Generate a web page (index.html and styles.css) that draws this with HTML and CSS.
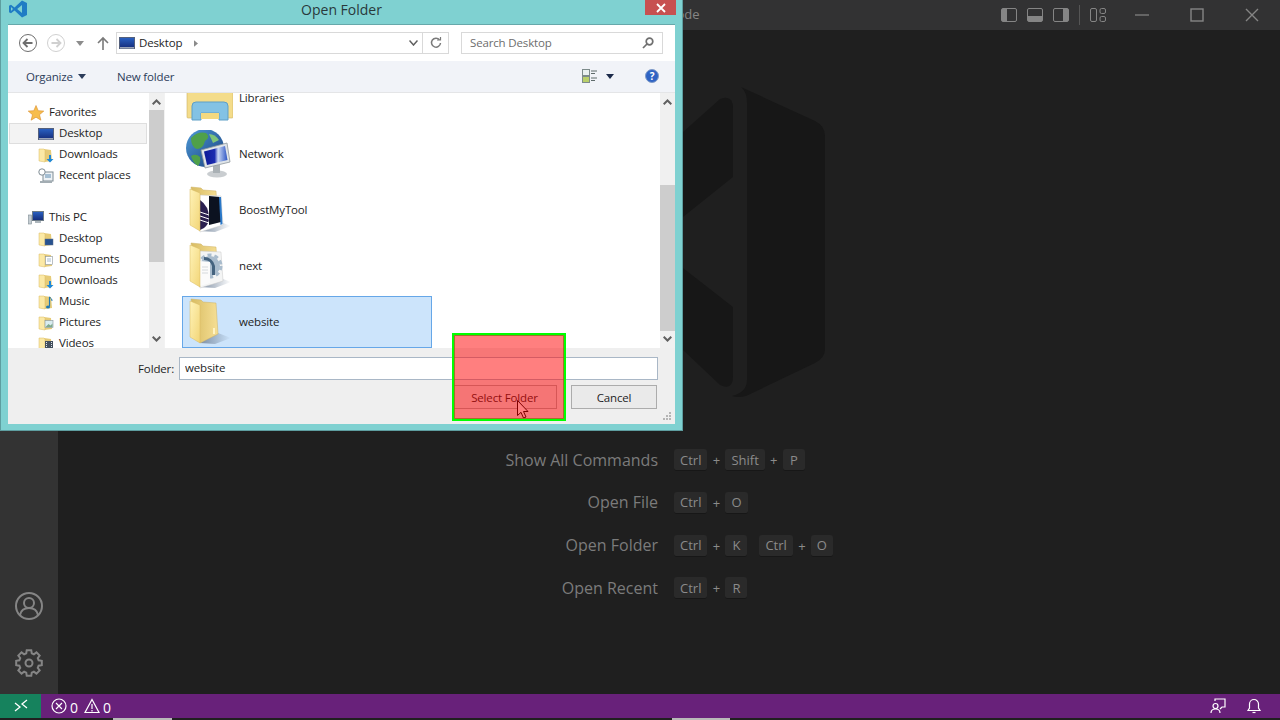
FILE: index.html
```html
<!DOCTYPE html>
<html lang="en">
<head>
    <meta charset="UTF-8">
    <title>Visual Studio Code - Open Folder</title>
    <link rel="stylesheet" href="styles.css">
</head>
<body>
    <svg class="sprite" width="0" height="0">
        <defs>
            <linearGradient id="leaf" x1="0" y1="0" x2="1" y2="1">
                <stop offset="0" stop-color="#fff3b8"/>
                <stop offset="1" stop-color="#f2d577"/>
            </linearGradient>
            <linearGradient id="back" x1="0" y1="0" x2="1" y2="0">
                <stop offset="0" stop-color="#d8bc62"/>
                <stop offset="1" stop-color="#f6df95"/>
            </linearGradient>
            <linearGradient id="fade" x1="0" y1="0" x2="1" y2="0">
                <stop offset="0" stop-color="#7d8ea3"/>
                <stop offset="1" stop-color="#7d8ea3" stop-opacity="0"/>
            </linearGradient>
            <linearGradient id="screen" x1="0" y1="0" x2="0" y2="1">
                <stop offset="0" stop-color="#2a62c4"/>
                <stop offset="1" stop-color="#142a78"/>
            </linearGradient>
            <linearGradient id="globe" x1="0" y1="0" x2="1" y2="1">
                <stop offset="0" stop-color="#4f9ad8"/>
                <stop offset="1" stop-color="#173f7c"/>
            </linearGradient>
            <linearGradient id="shine" x1="0" y1="0" x2="1" y2="0">
                <stop offset="0" stop-color="#0d1a96"/>
                <stop offset="0.45" stop-color="#1a2cb0"/>
                <stop offset="0.6" stop-color="#c9d8f4"/>
                <stop offset="1" stop-color="#2c54c4"/>
            </linearGradient>
            <symbol id="folder-back" viewBox="0 0 48 48">
                <polygon points="15,45 33,35 46,40 30,46" fill="url(#fade)"/>
                <polygon points="6,1 16,2 18,4 31,5 33,36 15,45" fill="url(#back)" stroke="#cdb162" stroke-width=".5"/>
            </symbol>
            <symbol id="folder-leaf" viewBox="0 0 48 48">
                <polygon points="5,3 15,7 15,45 5,39" fill="url(#leaf)" stroke="#d9bb63" stroke-width=".5"/>
            </symbol>
            <symbol id="folder-sm" viewBox="0 0 16 16">
                <polygon points="6,2 13,3 14,14 6,15" fill="#e6cb78"/>
                <polygon points="1,2 6,2 7,3 7,15 1,14" fill="#fbe9a6" stroke="#d9bb63" stroke-width=".5"/>
            </symbol>
            <symbol id="monitor-sm" viewBox="0 0 16 16">
                <rect x="0.5" y="2.5" width="15" height="11" fill="url(#screen)" stroke="#54607c"/>
                <rect x="1" y="12" width="14" height="1.5" fill="#9aa4b8"/>
            </symbol>
        </defs>
    </svg>

    <div class="workbench">
        <header class="titlebar">
            <span class="app-title">Visual Studio Code</span>
            <div class="layout-icons">
                <svg class="tb-icon" viewBox="0 0 16 16"><rect x="0.5" y="1.5" width="15" height="13" rx="1.5" fill="none" stroke="#858585"/><rect x="1" y="2" width="5" height="12" fill="#858585"/></svg>
                <svg class="tb-icon" viewBox="0 0 16 16"><rect x="0.5" y="1.5" width="15" height="13" rx="1.5" fill="none" stroke="#858585"/><rect x="1" y="9" width="14" height="5" fill="#858585"/></svg>
                <svg class="tb-icon" viewBox="0 0 16 16"><rect x="0.5" y="1.5" width="15" height="13" rx="1.5" fill="none" stroke="#858585"/><rect x="10" y="2" width="5" height="12" fill="#858585"/></svg>
                <span class="tb-sep"></span>
                <svg class="tb-icon" viewBox="0 0 16 16" fill="none" stroke="#858585"><rect x="0.5" y="1.5" width="6" height="13" rx="1.5"/><rect x="10" y="1.5" width="5.5" height="5" rx="1.5"/><rect x="10" y="9.5" width="5.5" height="5" rx="1.5"/></svg>
            </div>
            <div class="win-controls">
                <svg class="win-icon" viewBox="0 0 14 14"><path d="M0 7h14" stroke="#858585" stroke-width="1.2"/></svg>
                <svg class="win-icon" viewBox="0 0 14 14"><rect x="1" y="1" width="12" height="12" fill="none" stroke="#858585" stroke-width="1.4"/></svg>
                <svg class="win-icon" viewBox="0 0 14 14"><path d="M1 1l12 12M13 1L1 13" stroke="#858585" stroke-width="1.4"/></svg>
            </div>
        </header>

        <div class="middle">
            <nav class="activitybar">
                <svg class="act-icon" viewBox="0 0 28 28" fill="none" stroke="#858585" stroke-width="2">
                    <circle cx="14" cy="14" r="13"/>
                    <circle cx="14" cy="11" r="5"/>
                    <path d="M5 23c1-5 4-7 9-7s8 2 9 7"/>
                </svg>
                <svg class="act-icon" viewBox="0 0 28 28" fill="none" stroke="#858585" stroke-width="2">
                    <polygon points="11.24,4.39 11.74,1.2 16.26,1.2 16.76,4.39 18.85,5.25 21.46,3.35 24.65,6.54 22.75,9.15 23.61,11.24 26.8,11.74 26.8,16.26 23.61,16.76 22.75,18.85 24.65,21.46 21.46,24.65 18.85,22.75 16.76,23.61 16.26,26.8 11.74,26.8 11.24,23.61 9.15,22.75 6.54,24.65 3.35,21.46 5.25,18.85 4.39,16.76 1.2,16.26 1.2,11.74 4.39,11.24 5.25,9.15 3.35,6.54 6.54,3.35 9.15,5.25"/>
                    <circle cx="14" cy="14" r="3.5"/>
                </svg>
            </nav>

            <main class="editor">
                <svg class="watermark" viewBox="513 87 312 310">
                    <path d="M741 87L815 121Q825 126 825 136V349Q825 358 815 363L746 396Q738 398 732 396Q747 392 747 380V103Q747 92 741 87Z"/>
                    <path d="M683 132L720 99Q733 94 733 108V177L683 217Z"/>
                    <path d="M683 268L733 307V376Q733 391 720 385L683 350Z"/>
                </svg>
                <div class="shortcuts">
                    <span class="sc-label">Show All Commands</span>
                    <div class="keys"><kbd>Ctrl</kbd><i>+</i><kbd>Shift</kbd><i>+</i><kbd>P</kbd></div>
                    <span class="sc-label">Open File</span>
                    <div class="keys"><kbd>Ctrl</kbd><i>+</i><kbd>O</kbd></div>
                    <span class="sc-label">Open Folder</span>
                    <div class="keys"><kbd>Ctrl</kbd><i>+</i><kbd>K</kbd><b class="chord"></b><kbd>Ctrl</kbd><i>+</i><kbd>O</kbd></div>
                    <span class="sc-label">Open Recent</span>
                    <div class="keys"><kbd>Ctrl</kbd><i>+</i><kbd>R</kbd></div>
                </div>
            </main>
        </div>

        <footer class="statusbar">
            <div class="remote">
                <svg class="st-icon" viewBox="0 0 16 16" fill="none" stroke="#fff" stroke-width="1.3"><path d="M2 5l5 4-5 4M14 2L9 6l5 4"/></svg>
            </div>
            <svg class="st-icon err" viewBox="0 0 16 16" fill="none" stroke="#fff" stroke-width="1.2"><circle cx="8" cy="8" r="7"/><path d="M5 5l6 6M11 5l-6 6"/></svg>
            <span class="st-num">0</span>
            <svg class="st-icon" viewBox="0 0 16 16" fill="none" stroke="#fff" stroke-width="1.2"><path d="M8 1.5L15 14.5H1Z"/><path d="M8 6v5M8 12v1.5"/></svg>
            <span class="st-num">0</span>
            <div class="st-right">
                <svg class="st-icon" viewBox="0 0 16 16" fill="none" stroke="#fff" stroke-width="1.2"><path d="M5 3V1h10v8h-3l-2 2"/><circle cx="5.5" cy="8" r="2.5"/><path d="M1 15c0-3 2-4 4.500-4s4.500 1 4.500 4"/></svg>
                <svg class="st-icon" viewBox="0 0 16 16" fill="none" stroke="#fff" stroke-width="1.2"><path d="M2 12.500h12L12.500 10V6a4.500 4.500 0 0 0-9 0v4Z"/><path d="M6.500 14.500h3"/></svg>
            </div>
        </footer>
        <div class="video-strip"><span class="strip-a"></span><span class="strip-b"></span></div>
    </div>

    <div class="dialog">
        <div class="dlg-title">
            <svg class="dlg-logo" viewBox="0 0 18 18">
                <path d="M13 0.500L18 3v12l-5 2.500L5.500 10.500 2 13.300 0 12.200V5.800L2 4.700 5.500 7.500Z" fill="#1f7cc4"/>
                <path d="M13 5L8.200 9 13 13Z" fill="#7fd1d1"/>
                <path d="M2 7v4l2-2Z" fill="#7fd1d1"/>
            </svg>
            <span class="dlg-name">Open Folder</span>
            <span class="dlg-close"><svg viewBox="0 0 10 10" width="10" height="10"><path d="M1 1l8 8M9 1l-8 8" stroke="#fff" stroke-width="1.800"/></svg></span>
        </div>

        <div class="dlg-client">
            <div class="addr-row">
                <svg class="circle-btn" viewBox="0 0 18 18" fill="none" stroke="#6e6e6e"><circle cx="9" cy="9" r="8.500"/><path d="M13.500 9H5M8.500 5L4.500 9l4 4" stroke-width="1.800"/></svg>
                <svg class="circle-btn fwd" viewBox="0 0 18 18" fill="none" stroke="#d0d0d0"><circle cx="9" cy="9" r="8.500"/><path d="M4.500 9H13M9.500 5l4 4-4 4" stroke-width="1.800"/></svg>
                <svg class="addr-caret" viewBox="0 0 8 5"><path d="M0 0h8L4 5Z" fill="#8c8c8c"/></svg>
                <svg class="addr-up" viewBox="0 0 12 14" fill="none" stroke="#7a7a7a" stroke-width="1.600"><path d="M6 14V2M1 7l5-5 5 5"/></svg>
                <div class="addr-box">
                    <svg class="icon16"><use href="#monitor-sm"/></svg>
                    <span class="addr-text">Desktop</span>
                    <svg class="addr-sep" viewBox="0 0 5 8"><path d="M0 0l5 4-5 4Z" fill="#8a8a8a"/></svg>
                    <svg class="addr-drop" viewBox="0 0 9 6" fill="none" stroke="#5f5f5f" stroke-width="1.500"><path d="M0.500 0.500L4.500 5l4-4.500"/></svg>
                    <span class="addr-refresh">
                        <svg viewBox="0 0 12 12" width="12" height="12" fill="none" stroke="#7a7a7a" stroke-width="1.500"><path d="M9.500 2.800A4.500 4.500 0 1 0 10.500 6"/><path d="M7 3h3.500V0" stroke-width="1.200"/></svg>
                    </span>
                </div>
                <div class="search-box">
                    <span class="search-text">Search Desktop</span>
                    <svg viewBox="0 0 12 12" width="12" height="12" fill="none" stroke="#6f6f6f" stroke-width="1.700"><circle cx="7.500" cy="4.500" r="3.300"/><path d="M5 7l-4 4"/></svg>
                </div>
            </div>

            <div class="toolbar">
                <span class="tool">Organize</span>
                <svg class="tool-caret" viewBox="0 0 8 5"><path d="M0 0h8L4 5Z" fill="#2c3c5a"/></svg>
                <span class="tool new-folder">New folder</span>
                <svg class="view-icon" viewBox="0 0 16 14" fill="none">
                    <rect x="0.500" y="0.500" width="7" height="6" fill="#e9f0f0" stroke="#7d8b8b"/>
                    <rect x="0.500" y="7.500" width="7" height="6" fill="#b9cf6a" stroke="#7d8b8b"/>
                    <path d="M9 2h6M9 4.500h4M9 9h6M9 11.500h4" stroke="#5f6b6b"/>
                </svg>
                <svg class="view-caret" viewBox="0 0 8 5"><path d="M0 0h8L4 5Z" fill="#1c2a4a"/></svg>
                <span class="help">?</span>
            </div>

            <div class="dlg-body">
                <ul class="tree">
                    <li class="tree-row head">
                        <svg class="icon16" viewBox="0 0 16 16"><polygon points="8,0.500 10.200,5.700 15.800,6.100 11.500,9.700 12.900,15.200 8,12.200 3.100,15.200 4.500,9.700 0.200,6.100 5.800,5.700" fill="#f7bd4d" stroke="#d98d2c" stroke-width=".6"/></svg>
                        <span>Favorites</span>
                    </li>
                    <li class="tree-row selected"><svg class="icon16"><use href="#monitor-sm"/></svg><span>Desktop</span></li>
                    <li class="tree-row">
                        <svg class="icon16" viewBox="0 0 16 16"><use href="#folder-sm"/><path d="M11 8v4H8.500l3.500 3.500 3.500-3.500H13V8Z" fill="#1e88d8"/></svg>
                        <span>Downloads</span>
                    </li>
                    <li class="tree-row">
                        <svg class="icon16" viewBox="0 0 16 16"><rect x="5" y="4" width="10" height="9" fill="#eef2f5" stroke="#7f8c94"/><path d="M7 7h6M7 9h6" stroke="#5c8bb0"/><circle cx="4" cy="4" r="3.200" fill="#fff" stroke="#7f8c94"/><rect x="2" y="13" width="12" height="2" fill="#a3adb3"/></svg>
                        <span>Recent places</span>
                    </li>
                    <li class="tree-gap"></li>
                    <li class="tree-row head">
                        <svg class="icon16" viewBox="0 0 16 16"><rect x="0.500" y="5" width="3" height="9" fill="#c5cdd2" stroke="#7f8c94" stroke-width=".6"/><rect x="4.500" y="1.500" width="11" height="9" fill="url(#screen)" stroke="#6d7b86"/><rect x="7" y="11" width="6" height="2" fill="#aeb7bd"/></svg>
                        <span>This PC</span>
                    </li>
                    <li class="tree-row">
                        <svg class="icon16" viewBox="0 0 16 16"><use href="#folder-sm"/><rect x="7" y="8" width="8" height="6" fill="#27528f" stroke="#5c6f8a" stroke-width=".5"/></svg>
                        <span>Desktop</span>
                    </li>
                    <li class="tree-row">
                        <svg class="icon16" viewBox="0 0 16 16"><use href="#folder-sm"/><rect x="7.500" y="4.500" width="7" height="8" fill="#fff" stroke="#8a949c" stroke-width=".6"/><path d="M9 7h4M9 9h4" stroke="#7ea0bd" stroke-width=".7"/></svg>
                        <span>Documents</span>
                    </li>
                    <li class="tree-row">
                        <svg class="icon16" viewBox="0 0 16 16"><use href="#folder-sm"/><path d="M11 8v4H8.500l3.500 3.500 3.500-3.500H13V8Z" fill="#1e88d8"/></svg>
                        <span>Downloads</span>
                    </li>
                    <li class="tree-row">
                        <svg class="icon16" viewBox="0 0 16 16"><use href="#folder-sm"/><path d="M11.500 3v9.500" stroke="#1f78b4" stroke-width="1.200"/><ellipse cx="10" cy="13" rx="2" ry="1.500" fill="#1f78b4"/><path d="M11.500 3q3 2 2.500 4" stroke="#1f78b4" fill="none"/></svg>
                        <span>Music</span>
                    </li>
                    <li class="tree-row">
                        <svg class="icon16" viewBox="0 0 16 16"><use href="#folder-sm"/><rect x="7" y="5.500" width="8" height="7" fill="#d9ecf0" stroke="#86949c" stroke-width=".6"/><path d="M7.500 12l3-3 2 1.500 2-2V12Z" fill="#7faa8d"/></svg>
                        <span>Pictures</span>
                    </li>
                    <li class="tree-row">
                        <svg class="icon16" viewBox="0 0 16 16"><use href="#folder-sm"/><rect x="7" y="5" width="8" height="8" fill="#44505e"/><path d="M8.500 6v6M13.500 6v6" stroke="#dfe6ea" stroke-dasharray="1 1"/></svg>
                        <span>Videos</span>
                    </li>
                </ul>

                <div class="scrollbar">
                    <svg class="sb-arrow" viewBox="0 0 9 6" fill="none" stroke="#606060" stroke-width="2"><path d="M0.700 5.300L4.500 1.500l3.800 3.800"/></svg>
                    <div class="thumb thumb-tree"></div>
                    <svg class="sb-arrow sb-down" viewBox="0 0 9 6" fill="none" stroke="#606060" stroke-width="2"><path d="M0.700 0.700l3.800 3.800 3.800-3.800"/></svg>
                </div>

                <div class="files">
                    <div class="file-row">
                        <svg class="icon48" viewBox="0 0 48 48">
                            <rect x="2" y="2" width="46" height="42" rx="1" fill="#f4dc8a" stroke="#cdb162" stroke-width=".6"/>
                            <path d="M7 46V32q0-4 4-4h28q4 0 4 4v14h-9v-7H16v7Z" fill="#83c2e4" stroke="#5e9fc6"/>
                            <rect x="16" y="39" width="18" height="6" fill="#f3d980"/>
                        </svg>
                        <span>Libraries</span>
                    </div>
                    <div class="file-row">
                        <svg class="icon48" viewBox="0 0 48 48">
                            <circle cx="20" cy="18" r="19" fill="url(#globe)"/>
                            <path d="M6 8q7-7 15-5 5 4-1 8-2 8-8 8-6-2-6-11ZM6 26q5-3 9 1 1 6-2 9-5-3-7-10Z" fill="#4fa04a"/>
                            <path d="M24 4q6 0 10 6l-6 3Z" fill="#7fc478"/>
                            <ellipse cx="32" cy="44" rx="10" ry="3.500" fill="#c9cdd0"/>
                            <rect x="28" y="35" width="7" height="8" fill="#aab1b5"/>
                            <polygon points="16,20 42,13 45,32 20,38" fill="#dfe4e8" stroke="#8e979c" stroke-width=".8"/>
                            <polygon points="19,21.500 40,16 42.500,30 22,35" fill="url(#shine)"/>
                        </svg>
                        <span>Network</span>
                    </div>
                    <div class="file-row">
                        <svg class="icon48" viewBox="0 0 48 48">
                            <use href="#folder-back"/>
                            <polygon points="15,9 36,10 38,39 15,46" fill="#fff" stroke="#c8c8c8" stroke-width=".5"/>
                            <polygon points="24,10 35,11 36,36 24,39" fill="#0c1220"/>
                            <polygon points="34,11 36,11 37.500,38 35.500,39" fill="#2a78c8"/>
                            <path d="M15 14q9 6 9 18 0 6-5 10l-4 2Z" fill="#2b2050"/>
                            <path d="M15 30l9 3M15 34l9 3M15 26l9 3" stroke="#fff" stroke-width="1"/>
                            <use href="#folder-leaf"/>
                        </svg>
                        <span>BoostMyTool</span>
                    </div>
                    <div class="file-row">
                        <svg class="icon48" viewBox="0 0 48 48">
                            <use href="#folder-back"/>
                            <polygon points="15,9 36,10 38,39 15,46" fill="#f4f5f5" stroke="#c8c8c8" stroke-width=".5"/>
                            <circle cx="25" cy="24" r="10" fill="#a9bccd"/>
                            <circle cx="25" cy="24" r="11" fill="none" stroke="#a9bccd" stroke-width="3" stroke-dasharray="4 3"/>
                            <path d="M19 15a11 11 0 0 1 11 9v9h-3v-9a8 8 0 0 0-8-6Z" fill="#44637f"/>
                            <path d="M15 19l10 1v21l-10 3Z" fill="#fbfbfb"/>
                            <path d="M17 25h6M17 28h6M17 31h6" stroke="#d5d9dc"/>
                            <use href="#folder-leaf"/>
                        </svg>
                        <span>next</span>
                    </div>
                    <div class="file-row selected">
                        <svg class="icon48" viewBox="0 0 48 48">
                            <use href="#folder-back"/>
                            <rect x="28" y="30" width="2" height="6" fill="#fff3c4"/>
                            <use href="#folder-leaf"/>
                        </svg>
                        <span>website</span>
                    </div>
                </div>

                <div class="scrollbar">
                    <svg class="sb-arrow" viewBox="0 0 9 6" fill="none" stroke="#606060" stroke-width="2"><path d="M0.700 5.300L4.500 1.500l3.800 3.800"/></svg>
                    <div class="thumb thumb-files"></div>
                    <svg class="sb-arrow sb-down" viewBox="0 0 9 6" fill="none" stroke="#606060" stroke-width="2"><path d="M0.700 0.700l3.800 3.800 3.800-3.800"/></svg>
                </div>
            </div>

            <div class="dlg-footer">
                <div class="folder-row">
                    <label for="folderName">Folder:</label>
                    <input id="folderName" type="text" value="website">
                </div>
                <div class="btn-row">
                    <button class="dlg-btn select-btn" type="button">Select Folder</button>
                    <button class="dlg-btn cancel-btn" type="button">Cancel</button>
                </div>
                <svg class="grip" viewBox="0 0 9 9" fill="#b5b5b5"><rect x="6" y="0" width="2" height="2"/><rect x="3" y="3" width="2" height="2"/><rect x="6" y="3" width="2" height="2"/><rect x="0" y="6" width="2" height="2"/><rect x="3" y="6" width="2" height="2"/><rect x="6" y="6" width="2" height="2"/></svg>
            </div>
        </div>
    </div>

    <svg class="cursor" viewBox="0 0 12 19"><path d="M0.500 0.500V15.500L4 12.300 6.500 18l2.500-1-2.500-5.500H11Z" fill="#fff" stroke="#000"/></svg>
    <div class="highlight"></div>
</body>
</html>
```

FILE: styles.css
```css
* {
    box-sizing: border-box;
}

body {
    margin: 0;
    width: 1280px;
    height: 720px;
    overflow: hidden;
    background-color: #1f1f1f;
    font-family: "Open Sans", "Noto Sans", sans-serif;
}

.sprite {
    position: absolute;
}

/* vs code window behind the dialog */
.workbench {
    display: flex;
    flex-direction: column;
    height: 720px;
}

.titlebar {
    height: 30px;
    flex: none;
    display: flex;
    align-items: center;
    background-color: #323233;
}

.app-title {
    margin-left: 587px;
    margin-top: -3px;
    width: 120px;
    font-size: 13px;
    color: #858585;
    white-space: nowrap;
}

.layout-icons {
    display: flex;
    align-items: center;
    gap: 10px;
    margin-left: 294px;
}

.tb-icon {
    width: 16px;
    height: 16px;
}

.tb-sep {
    width: 1px;
    height: 20px;
    background-color: #555;
}

.win-controls {
    display: flex;
    align-items: center;
    gap: 41px;
    margin-left: 29px;
}

.win-icon {
    width: 14px;
    height: 14px;
}

.middle {
    flex: 1;
    display: flex;
    min-height: 0;
}

.activitybar {
    width: 58px;
    flex: none;
    display: flex;
    flex-direction: column;
    justify-content: flex-end;
    align-items: center;
    gap: 29px;
    padding-bottom: 17px;
    background-color: #333333;
}

.act-icon {
    width: 28px;
    height: 28px;
}

.editor {
    flex: 1;
    padding-top: 57px;
    background-color: #1f1f1f;
}

.watermark {
    display: block;
    width: 312px;
    height: 310px;
    margin-left: 455px;
    fill: #171717;
}

.shortcuts {
    display: grid;
    grid-template-columns: 600px 1fr;
    column-gap: 16px;
    grid-auto-rows: 42.67px;
    align-items: center;
    margin-top: 42px;
}

.sc-label {
    text-align: right;
    font-size: 16px;
    line-height: 20px;
    margin-top: -1px;
    color: #7b7b7b;
}

.keys {
    display: flex;
    align-items: center;
    font-size: 13px;
    color: #8b8b8b;
}

.keys i {
    width: 18px;
    text-align: center;
    font-style: normal;
}

.keys kbd {
    height: 22px;
    min-width: 22px;
    padding: 0 6px;
    display: flex;
    align-items: center;
    justify-content: center;
    font-family: inherit;
    font-size: 13px;
    background-color: #2a2a2a;
    border-bottom: 1px solid #171717;
    border-radius: 3px;
}

.chord {
    width: 12px;
}

.statusbar {
    height: 24px;
    flex: none;
    display: flex;
    align-items: center;
    background-color: #68217a;
    color: #fff;
}

.remote {
    width: 41px;
    height: 100%;
    display: flex;
    align-items: center;
    justify-content: center;
    background-color: #16825d;
}

.st-icon {
    width: 16px;
    height: 16px;
}

.st-icon.err {
    margin-left: 10px;
}

.st-num {
    margin: 2px 6px 0 3px;
    font-size: 14px;
}

.st-right {
    margin-left: auto;
    display: flex;
    gap: 20px;
    padding-right: 18px;
}

.video-strip {
    height: 2px;
    flex: none;
    position: relative;
    background-color: #202020;
}

.strip-a,
.strip-b {
    position: absolute;
    top: 0;
    height: 2px;
    background-color: #b9b9b9;
}

.strip-a {
    left: 113px;
    width: 59px;
}

.strip-b {
    left: 672px;
    width: 58px;
}

/* windows file dialog */
.dialog {
    position: absolute;
    left: 0;
    top: 0;
    width: 683px;
    height: 431px;
    display: flex;
    flex-direction: column;
    background-color: #7fd1d1;
    border: 1px solid #5e9ea0;
    border-top: none;
    padding: 0 7px 6px 7px;
    font-size: 11.5px;
    letter-spacing: -0.15px;
    color: #1e1e1e;
}

.dlg-title {
    height: 25px;
    flex: none;
    position: relative;
    display: flex;
    justify-content: center;
}

.dlg-logo {
    position: absolute;
    left: 1px;
    top: 0;
    width: 18px;
    height: 18px;
}

.dlg-name {
    font-size: 14px;
    letter-spacing: 0;
    line-height: 20px;
    color: #29393b;
}

.dlg-close {
    position: absolute;
    right: -1px;
    top: 0;
    width: 31px;
    height: 15px;
    display: flex;
    align-items: center;
    justify-content: center;
    background-color: #c75050;
}

.dlg-client {
    flex: 1;
    display: flex;
    flex-direction: column;
    background-color: #fff;
    box-shadow: 0 -1px 0 #66a8aa;
}

.addr-row {
    height: 36px;
    flex: none;
    display: flex;
    align-items: center;
    padding-left: 11px;
}

.circle-btn {
    width: 18px;
    height: 18px;
}

.circle-btn.fwd {
    margin-left: 10px;
}

.addr-caret {
    width: 8px;
    height: 5px;
    margin-left: 11px;
}

.addr-up {
    width: 12px;
    height: 14px;
    margin-left: 13px;
}

.addr-box {
    width: 333px;
    height: 22px;
    margin-left: 7px;
    display: flex;
    align-items: center;
    padding-left: 2px;
    border: 1px solid #d9d9d9;
}

.addr-text {
    margin: -2px 0 0 4px;
}

.addr-sep {
    width: 4px;
    height: 7px;
    margin-left: 12px;
}

.addr-drop {
    width: 9px;
    height: 6px;
    margin-left: auto;
    margin-right: 4px;
}

.addr-refresh {
    width: 26px;
    height: 100%;
    display: flex;
    align-items: center;
    justify-content: center;
    border-left: 1px solid #d9d9d9;
}

.search-box {
    width: 202px;
    height: 22px;
    margin-left: 12px;
    display: flex;
    align-items: center;
    justify-content: space-between;
    padding: 0 8px;
    border: 1px solid #d9d9d9;
    color: #6d6d6d;
}

.search-text {
    margin-top: -2px;
}

.toolbar {
    height: 32px;
    flex: none;
    display: flex;
    align-items: center;
    padding: 0 0 1px 18px;
    background-color: #f1f3f8;
    border-bottom: 1px solid #e4e5e7;
}

.tool {
    color: #2c3c5a;
}

.tool-caret {
    width: 8px;
    height: 5px;
    margin-left: 5px;
}

.new-folder {
    margin-left: 31px;
}

.view-icon {
    width: 16px;
    height: 14px;
    margin-left: auto;
}

.view-caret {
    width: 8px;
    height: 5px;
    margin-left: 8px;
}

.help {
    width: 14px;
    height: 14px;
    margin: 0 16px 0 31px;
    border-radius: 50%;
    background-color: #2f63c4;
    border: 1px solid #7f9bc8;
    color: #fff;
    font-size: 10px;
    font-weight: bold;
    line-height: 12px;
    text-align: center;
}

.dlg-body {
    height: 255px;
    flex: none;
    display: flex;
    overflow: hidden;
}

.tree {
    width: 141px;
    flex: none;
    margin: 0;
    padding: 9px 0 0 1px;
    list-style: none;
    overflow: hidden;
}

.tree-row {
    height: 21px;
    width: 138px;
    display: flex;
    align-items: center;
    gap: 5px;
    padding-left: 28px;
    border: 1px solid transparent;
    white-space: nowrap;
}

.tree-row span {
    margin-top: -2px;
}

.tree-row.head {
    padding-left: 18px;
}

.tree-row.selected {
    background-color: #f3f3f3;
    border-color: #dedede;
}

.tree-gap {
    height: 21px;
}

.icon16 {
    width: 16px;
    height: 16px;
    flex: none;
}

.scrollbar {
    width: 15px;
    flex: none;
    display: flex;
    flex-direction: column;
    align-items: center;
    background-color: #f0f0f0;
}

.sb-arrow {
    width: 9px;
    height: 6px;
    margin-top: 6px;
    flex: none;
}

.sb-down {
    margin-top: auto;
    margin-bottom: 6px;
}

.thumb {
    width: 100%;
    background-color: #cdcdcd;
    flex: none;
}

.thumb-tree {
    height: 152px;
    margin-top: 5px;
}

.thumb-files {
    height: 146px;
    margin-top: 80px;
}

.files {
    flex: 1;
    margin-top: -21px;
    padding-left: 17px;
    border-left: 1px solid #f2f2f2;
}

.file-row {
    width: 250px;
    height: 52px;
    margin-bottom: 4px;
    display: flex;
    align-items: center;
    gap: 6px;
    padding-left: 2px;
    border: 1px solid transparent;
}

.file-row span {
    margin-top: -2px;
}

.file-row.selected {
    background-color: #cce4fb;
    border-color: #66a7e8;
}

.icon48 {
    width: 48px;
    height: 48px;
    flex: none;
}

.dlg-footer {
    flex: 1;
    position: relative;
    background-color: #efefef;
    padding: 9px 17px 0 0;
}

.folder-row {
    display: flex;
    justify-content: flex-end;
    align-items: center;
    gap: 5px;
}

.folder-row label {
    margin-top: -1px;
}

.folder-row input {
    width: 479px;
    height: 23px;
    padding: 0 5px 2px;
    border: 1px solid #a9b7c6;
    background: #fff;
    font-family: inherit;
    font-size: 11.5px;
    letter-spacing: -0.15px;
    color: #1e1e1e;
    outline: none;
}

.btn-row {
    display: flex;
    justify-content: flex-end;
    gap: 14px;
    margin: 5px 1px 0 0;
}

.dlg-btn {
    height: 24px;
    padding: 0;
    border: 1px solid #acacac;
    background-color: #eaeaea;
    font-family: inherit;
    font-size: 11.5px;
    letter-spacing: -0.15px;
    color: #1e1e1e;
}

.select-btn {
    width: 105px;
}

.cancel-btn {
    width: 86px;
}

.grip {
    position: absolute;
    right: 3px;
    bottom: 3px;
    width: 9px;
    height: 9px;
}

/* things drawn over the dialog in the video */
.cursor {
    position: absolute;
    left: 517px;
    top: 400px;
    width: 12px;
    height: 19px;
}

.highlight {
    position: absolute;
    left: 452px;
    top: 333px;
    width: 114px;
    height: 88px;
    background-color: rgba(255, 0, 0, 0.5);
    border: 2px solid #00ff00;
    box-shadow: inset 0 0 0 1px rgba(140, 110, 20, 0.8);
}
```
